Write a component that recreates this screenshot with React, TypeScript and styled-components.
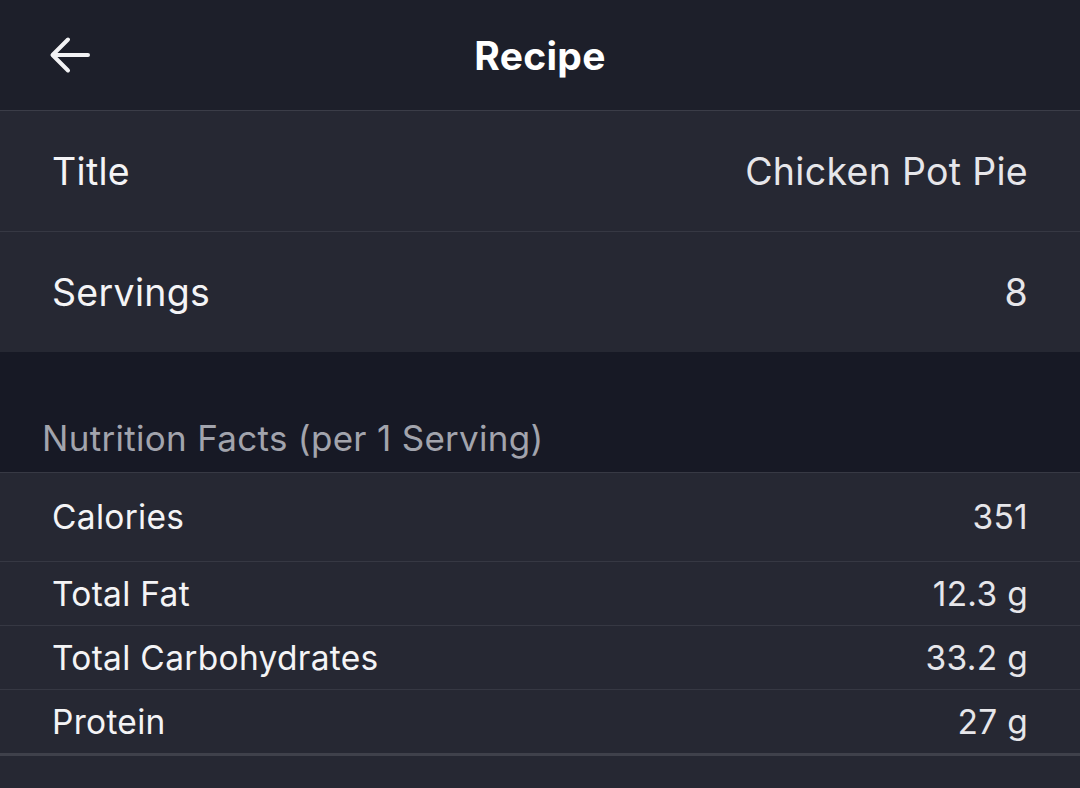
import { FC } from 'react';
import styled, { createGlobalStyle } from 'styled-components';

const GlobalStyle = createGlobalStyle`
  html, body {
    margin: 0;
    padding: 0;
    background: #262833;
  }
  body {
    font-family: Inter, "Noto Sans", sans-serif;
    -webkit-font-smoothing: antialiased;
  }
`;

const Screen = styled.div`
  width: 100%;
  min-height: 788px;
  display: flex;
  flex-direction: column;
  background: #262833;
`;

const NavBar = styled.header`
  height: 110px;
  display: grid;
  grid-template-columns: 160px 1fr 160px;
  align-items: center;
  background: #1d1f2a;
  border-bottom: 1px solid #3b3d48;
`;

const BackButton = styled.button`
  width: 60px;
  height: 60px;
  margin-left: 40px;
  padding: 0;
  border: none;
  background: none;
  display: flex;
  align-items: center;
  justify-content: center;
  color: #f2f2f4;
  cursor: pointer;
`;

const NavTitle = styled.h1`
  margin: 0;
  text-align: center;
  color: #ffffff;
  font-size: 39px;
  font-weight: 700;
  letter-spacing: 0.3px;
`;

const Group = styled.section`
  display: flex;
  flex-direction: column;
  background: #262833;
`;

const Row = styled.div<{ $height: number; $size: number; $last?: boolean; $flush?: boolean }>`
  height: ${(p) => p.$height}px;
  box-sizing: border-box;
  display: flex;
  align-items: center;
  justify-content: space-between;
  padding: 0 52px;
  font-size: ${(p) => p.$size}px;
  letter-spacing: 0.3px;
  border-bottom: ${(p) =>
    p.$flush ? 'none' : p.$last ? '3px solid #3f414b' : '1px solid #363843'};
`;

const Label = styled.span`
  color: #f4f4f6;
`;

const Value = styled.span`
  color: #e6e6ea;
`;

const SectionHeader = styled.div`
  height: 121px;
  box-sizing: border-box;
  display: flex;
  align-items: flex-end;
  padding: 0 42px 13px;
  background: #171925;
  border-bottom: 1px solid #373944;
  color: #a2a4ad;
  font-size: 35px;
  letter-spacing: 0.3px;
`;

const BackArrow: FC = () => (
  <svg width="44" height="44" viewBox="0 0 44 44" fill="none">
    <path
      d="M40 22H5M20 6.5L4.5 22L20 37.5"
      stroke="currentColor"
      strokeWidth="4"
      strokeLinecap="round"
      strokeLinejoin="round"
    />
  </svg>
);

const nutrition = [
  { label: 'Total Fat', value: '12.3 g' },
  { label: 'Total Carbohydrates', value: '33.2 g' },
  { label: 'Protein', value: '27 g' },
];

const App: FC = () => {
  return (
    <Screen>
      <GlobalStyle />
      <NavBar>
        <BackButton aria-label="Back">
          <BackArrow />
        </BackButton>
        <NavTitle>Recipe</NavTitle>
        <div />
      </NavBar>
      <Group>
        <Row $height={121} $size={37.5}>
          <Label>Title</Label>
          <Value>Chicken Pot Pie</Value>
        </Row>
        <Row $height={120} $size={37.5} $flush>
          <Label>Servings</Label>
          <Value>8</Value>
        </Row>
      </Group>
      <SectionHeader>Nutrition Facts (per 1 Serving)</SectionHeader>
      <Group>
        <Row $height={89} $size={33.5}>
          <Label>Calories</Label>
          <Value>351</Value>
        </Row>
        {nutrition.map((item, i) => (
          <Row
            key={item.label}
            $height={i === nutrition.length - 1 ? 66 : 64}
            $size={33.5}
            $last={i === nutrition.length - 1}
          >
            <Label>{item.label}</Label>
            <Value>{item.value}</Value>
          </Row>
        ))}
      </Group>
    </Screen>
  );
};

export default App;
